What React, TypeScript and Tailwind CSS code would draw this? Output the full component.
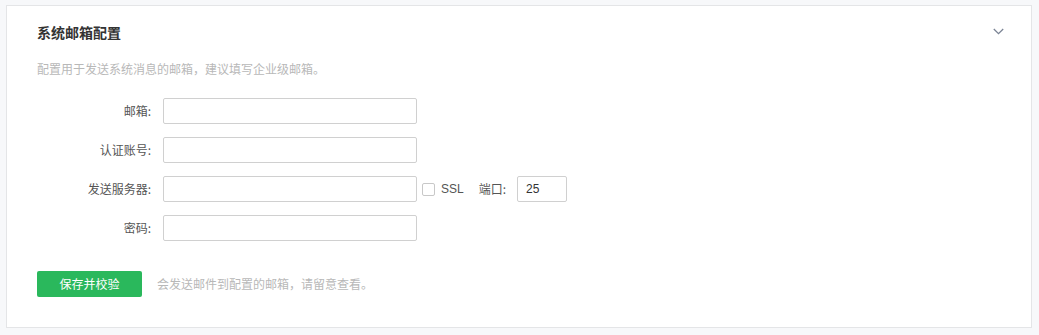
import React from 'react';

const font = { fontFamily: '"Noto Sans CJK SC", "Liberation Sans", sans-serif' };

function Field({ label, children }: { label: string; children?: React.ReactNode }) {
  return (
    <div className="flex items-center h-[26px]">
      <label className="w-[115px] pr-px text-right text-xs text-[#555]">{label}:</label>
      <input className="ml-[11px] w-[254px] h-[26px] border border-[#d0d0d0] rounded-[2px] bg-white px-2 text-xs outline-none" />
      {children}
    </div>
  );
}

export default function App() {
  return (
    <div className="w-[1039px] h-[335px] bg-[#f7f8fa] pt-[5px] pl-[6px]" style={font}>
      <div className="w-[1026px] h-[323px] bg-white border border-[#e4e5e7] px-[30px] relative">
        <div className="flex items-center justify-between h-[51px]">
          <h2 className="text-sm font-bold text-[#333]">系统邮箱配置</h2>
          <svg className="-mr-[3px] w-[11px] h-[7px] text-[#7a8394]" viewBox="0 0 11 7" fill="none">
            <path d="M0.8 1 L5.5 5.6 L10.2 1" stroke="currentColor" strokeWidth="1.3" />
          </svg>
        </div>
        <p className="mt-[4px] text-xs text-[#b8b8b8]">配置用于发送系统消息的邮箱，建议填写企业级邮箱。</p>
        <div className="mt-[21px] flex flex-col gap-[13px]">
          <Field label="邮箱" />
          <Field label="认证账号" />
          <Field label="发送服务器">
            <span className="ml-[5px] w-[13px] h-[13px] border border-[#c8c8c8] rounded-[2px] bg-white" />
            <span className="ml-[6px] text-xs text-[#555]" style={{ fontFamily: '"Liberation Sans", sans-serif' }}>SSL</span>
            <span className="ml-[15px] text-xs text-[#555]">端口:</span>
            <input
              defaultValue="25"
              className="ml-[11px] w-[50px] h-[26px] border border-[#d0d0d0] rounded-[2px] bg-white px-2 text-xs text-[#333] outline-none"
              style={{ fontFamily: '"Liberation Sans", sans-serif' }}
            />
          </Field>
          <Field label="密码" />
        </div>
        <div className="mt-[30px] flex items-center">
          <button className="w-[105px] h-[26px] bg-[#2ab85c] rounded-[2px] text-xs text-white">保存并校验</button>
          <span className="ml-[15px] text-xs text-[#b8b8b8]">会发送邮件到配置的邮箱，请留意查看。</span>
        </div>
      </div>
    </div>
  );
}
